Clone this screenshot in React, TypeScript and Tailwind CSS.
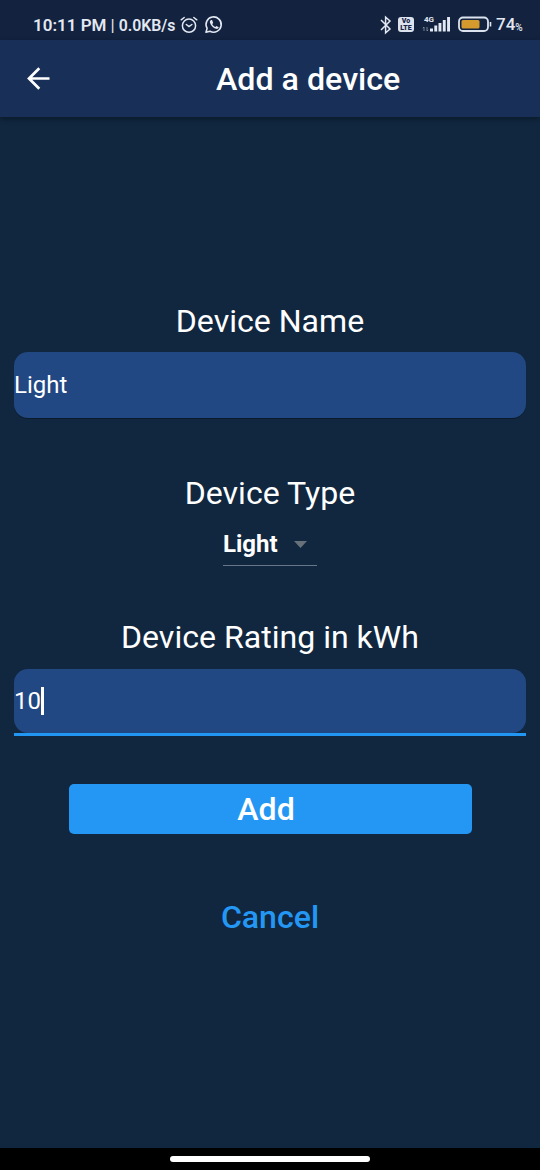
import React from "react";

function StatusBar() {
  return (
    <div className="flex h-10 items-start bg-[#12223f] pt-[13px] text-[#e3e8f2]">
      <div className="ml-[33px] mt-px flex h-6 w-[143px] items-center whitespace-nowrap text-[17px] font-semibold">
        10:11 PM<span className="mx-[4px] font-normal">|</span><span className="text-[15.8px]">0.0KB/s</span>
      </div>
      <svg className="ml-[3px] mt-[2px] h-5 w-5" viewBox="0 0 20 20" fill="none" stroke="currentColor" strokeWidth="1.5" strokeLinecap="round">
        <circle cx="10" cy="10.7" r="6.6" />
        <path d="M2.2 4.8 5.2 2.5M17.8 4.8 14.8 2.5M7.3 9.5 10 11.6l2.9-2.1" />
      </svg>
      <svg className="ml-[5px] mt-[2px] h-5 w-5" viewBox="0 0 20 20" fill="none" stroke="currentColor" strokeWidth="1.6">
        <path d="M2 17.3 3.1 13.4A7.6 7.6 0 1 1 6 16.2Z" strokeLinejoin="round" />
        <path d="M7.2 5.1c-1.1.4-1.6 1.4-1.2 2.6.8 2.9 3.1 5.2 6 6.1 1.3.4 2.5-.2 2.8-1.5l-2.4-1.4-1.1 1.1c-1.5-.6-2.4-1.5-3.1-2.9l1-1.1-1.1-2.9Z" fill="currentColor" stroke="none" />
      </svg>
      <svg className="ml-[156px] mt-[2px] h-5 w-3" viewBox="0 0 12 20" fill="none" stroke="currentColor" strokeWidth="1.5">
        <path d="m1 5 9 9-4.4 3.8V2.2L10 6l-9 9" />
      </svg>
      <div className="ml-[6px] mt-[4px] flex h-[15px] w-4 flex-col items-center justify-center rounded-[3px] bg-[#dce3ef] text-[7px] font-black leading-[6.5px] text-[#12223f]">
        <span>Vo</span>
        <span>LTE</span>
      </div>
      <div className="ml-2 flex h-5 w-[29px] flex-col">
        <span className="ml-[2px] mt-[3px] text-[8px] font-bold leading-[8px]">4G</span>
        <svg className="-mt-[8px] h-4 w-[29px] shrink-0" viewBox="0 0 29 16" fill="currentColor">
          <path d="M2 11v4M0.8 12.2 2 11M5 11v4M5 15l1.2-1.2" stroke="currentColor" strokeWidth=".8" opacity=".6" />
          <path d="M8 12.5h3v3H8zM12.3 9.5h2.9v6h-2.9zM16.5 7h2.9v8.5h-2.9zM20.8 4h2.9v11.5h-2.9zM25.1 1H28v14.5h-2.9z" />
        </svg>
      </div>
      <svg className="ml-[7px] mt-[3px] h-4 w-[34px]" viewBox="0 0 34 16" fill="none">
        <rect x="1" y="1.5" width="29" height="13.5" rx="4" stroke="#dce3ef" strokeWidth="1.8" />
        <rect x="3.5" y="4" width="18" height="8.5" rx="1.5" fill="#d49a2d" />
        <path d="M32.5 6v4.5" stroke="#dce3ef" strokeWidth="1.6" />
      </svg>
      <div className="ml-[4px] flex h-6 items-center whitespace-nowrap text-[17px] font-medium">
        74<span className="mt-[5px] text-[10px]">%</span>
      </div>
    </div>
  );
}

export default function App() {
  return (
    <div className="flex h-[1170px] w-[540px] flex-col overflow-hidden bg-[#10273f] font-['Roboto',sans-serif] text-white">
      <StatusBar />
      <header className="z-10 flex h-[77px] items-center bg-[#183058] shadow-[0_2px_5px_rgba(0,0,0,0.35)]">
        <svg className="ml-[27px] h-6 w-6" viewBox="0 0 24 24" fill="none" stroke="currentColor" strokeWidth="2.7">
          <path d="M22.5 11.5H2M12.3 1.3 2 11.5l10.3 10.2" />
        </svg>
        <h1 className="ml-[165px] whitespace-nowrap text-[32.2px] font-medium leading-[38px]">Add a device</h1>
      </header>
      <main className="flex flex-1 flex-col items-center px-[14px]">
        <label className="mt-[184px] text-[32.1px] leading-10">Device Name</label>
        <div className="mt-[11px] flex h-[66px] w-full items-center rounded-[14px] bg-[#224883] text-[24px] shadow-[0_1px_0_rgba(0,0,0,0.3)]">Light</div>
        <label className="mt-[55px] text-[32.1px] leading-10">Device Type</label>
        <div className="mt-[9px] flex h-[44px] w-[94px] items-center justify-between border-b border-[#66778a] pr-[10px]">
          <span className="text-[24px] font-bold">Light</span>
          <svg className="mt-[2px] h-[7px] w-[13px]" viewBox="0 0 13 7" fill="#68717a"><path d="M0 0h13L6.5 7z" /></svg>
        </div>
        <label className="mt-[51px] text-[32.1px] leading-10">Device Rating in kWh</label>
        <div className="mt-[12px] flex w-full flex-col">
          <div className="flex h-[64px] items-center rounded-[14px] bg-[#224883] text-[24px]">
            10<span className="h-7 w-[3px] bg-white" />
          </div>
          <div className="h-[3px] bg-[#2196f3]" />
        </div>
        <button className="mt-[48px] h-[50px] w-[403px] rounded-[5px] bg-[#2497f4] pr-[8px] text-[32.1px] font-medium leading-[50px]">Add</button>
        <button className="mt-[63px] text-[32.1px] font-medium leading-10 text-[#2497f4]">Cancel</button>
      </main>
      <footer className="flex h-[22px] justify-center bg-black pt-[8px]">
        <div className="h-[6px] w-[200px] rounded-full bg-white" />
      </footer>
    </div>
  );
}
